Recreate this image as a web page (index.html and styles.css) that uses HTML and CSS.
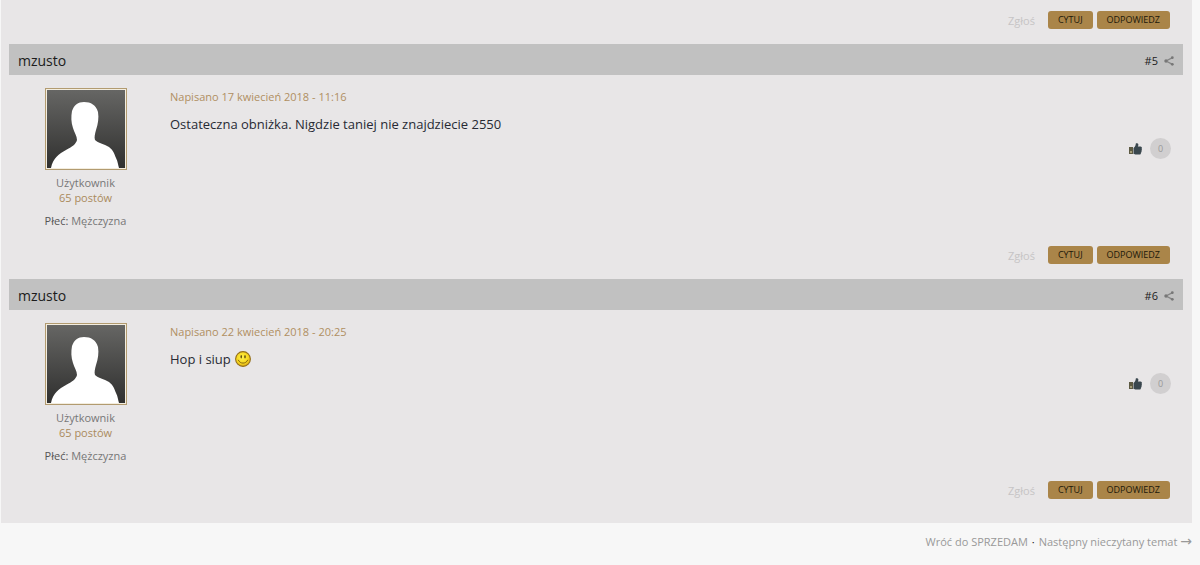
FILE: index.html
```
<!DOCTYPE html>
<html lang="pl">
<head>
	<meta charset="UTF-8">
	<meta name="viewport" content="width=device-width, initial-scale=1.0">
	<title>SPRZEDAM</title>
	<link rel="stylesheet" href="styles.css">
</head>
<body>

	<!-- shared shapes -->
	<svg class="defs" width="0" height="0">
		<defs>
			<linearGradient id="shade" x1="0" y1="0" x2="0" y2="1">
				<stop offset="0" stop-color="#666664"/>
				<stop offset="1" stop-color="#30302f"/>
			</linearGradient>
			<radialGradient id="gold" cx="0.45" cy="0.4" r="0.65">
				<stop offset="0" stop-color="#fff04a"/>
				<stop offset="0.6" stop-color="#f7d81f"/>
				<stop offset="1" stop-color="#d9a514"/>
			</radialGradient>
		</defs>
		<symbol id="person" viewBox="0 0 78 78">
			<rect width="78" height="78" fill="url(#shade)"/>
			<path fill="#fff" d="M4 78C6 68 12 64 19 60C25 57 29 54 30 50C30 46 27 42 26 38C24 32 24 27 25 21C27 15 31 12 37 12C44 12 49 15 51 22C52 28 51 34 49 40C48 44 47 47 48 50C51 53 57 54 62 57C66 60 67 63 69 68C71 72 71 75 72 78Z"/>
		</symbol>
		<symbol id="share" viewBox="0 0 10 10">
			<path d="M8.500 1.700L2 5L8.500 8.300" fill="none" stroke="#858585" stroke-width="1.3"/>
			<circle cx="8.300" cy="1.700" r="1.400" fill="#777"/>
			<circle cx="2" cy="5" r="1.700" fill="#777"/>
			<circle cx="8.300" cy="8.300" r="1.400" fill="#777"/>
		</symbol>
		<symbol id="thumb" viewBox="0 0 13 12">
			<rect x="0" y="4" width="4" height="7" fill="#5d5a43"/>
			<rect x="1" y="8" width="2" height="2" fill="#a59d78"/>
			<path fill="#3a474e" d="M4.500 5C6.200 4 6.700 2.500 6.800 0.600C7 0 9 0 9.300 1.300C9.500 2.300 9.200 2.800 8.800 3.500H11.500C13 3.500 13.200 5.200 12.600 5.700C13.100 6.400 12.900 7.400 12.400 7.800C12.800 8.500 12.500 9.400 11.900 9.700C12 11 11.400 11.500 10.500 11.500H7C6 11.500 5.500 11 4.500 11Z"/>
		</symbol>
		<symbol id="smile" viewBox="0 0 16 16">
			<circle cx="8" cy="8" r="7.400" fill="url(#gold)" stroke="#94701c" stroke-width="1.1"/>
			<ellipse cx="6.200" cy="5.700" rx="0.700" ry="1.700" fill="#4d3a08"/>
			<ellipse cx="10" cy="5.700" rx="0.700" ry="1.700" fill="#4d3a08"/>
			<path d="M3.200 8.800C5 13.200 11 13.200 12.800 8.800" fill="none" stroke="#7a5a0c" stroke-width="0.9"/>
		</symbol>
	</svg>

	<main class="topic">
		<div class="controls">
			<a class="report" href="#">Zgłoś</a>
			<button class="btn" type="button">CYTUJ</button>
			<button class="btn" type="button">ODPOWIEDZ</button>
		</div>

		<article class="post">
			<header class="post-head">
				<h3 class="nick">mzusto</h3>
				<a class="number" href="#">#5 <svg class="share"><use href="#share"/></svg></a>
			</header>
			<div class="post-wrap">
				<aside class="author">
					<svg class="avatar"><use href="#person"/></svg>
					<p class="group">Użytkownik</p>
					<p class="count">65 postów</p>
					<p class="gender"><b>Płeć:</b> Mężczyzna</p>
				</aside>
				<div class="post-body">
					<p class="date">Napisano 17 kwiecień 2018 - 11:16</p>
					<p class="message">Ostateczna obniżka. Nigdzie taniej nie znajdziecie 2550</p>
					<div class="rep">
						<button class="like" type="button" aria-label="Lubię to"><svg><use href="#thumb"/></svg></button>
						<span class="score">0</span>
					</div>
				</div>
			</div>
			<div class="controls">
				<a class="report" href="#">Zgłoś</a>
				<button class="btn" type="button">CYTUJ</button>
				<button class="btn" type="button">ODPOWIEDZ</button>
			</div>
		</article>

		<article class="post">
			<header class="post-head">
				<h3 class="nick">mzusto</h3>
				<a class="number" href="#">#6 <svg class="share"><use href="#share"/></svg></a>
			</header>
			<div class="post-wrap">
				<aside class="author">
					<svg class="avatar"><use href="#person"/></svg>
					<p class="group">Użytkownik</p>
					<p class="count">65 postów</p>
					<p class="gender"><b>Płeć:</b> Mężczyzna</p>
				</aside>
				<div class="post-body">
					<p class="date">Napisano 22 kwiecień 2018 - 20:25</p>
					<p class="message">Hop i siup <svg class="emo"><use href="#smile"/></svg></p>
					<div class="rep">
						<button class="like" type="button" aria-label="Lubię to"><svg><use href="#thumb"/></svg></button>
						<span class="score">0</span>
					</div>
				</div>
			</div>
			<div class="controls">
				<a class="report" href="#">Zgłoś</a>
				<button class="btn" type="button">CYTUJ</button>
				<button class="btn" type="button">ODPOWIEDZ</button>
			</div>
		</article>
	</main>

	<nav class="topic-nav">
		<a href="#">Wróć do SPRZEDAM</a>
		<span class="dot">·</span>
		<a href="#">Następny nieczytany temat <span class="arrow">→</span></a>
	</nav>

</body>
</html>
```
FILE: styles.css
```
* {
	box-sizing: border-box;
}
body {
	margin: 0;
	background: #f7f7f7;
	color: #272a34;
	font-family: "Open Sans", sans-serif;
	font-size: 13px;
}
p, h3 {
	margin: 0;
	font-weight: normal;
}
a {
	color: inherit;
	text-decoration: none;
}
button {
	border: 0;
	font-family: inherit;
	cursor: pointer;
}
.defs {
	display: block;
}
.topic {
	margin: 0 8px 0 1px;
	padding: 11px 9px 9px 8px;
	background: #e8e6e7;
}

/* buttons under a post */
.controls {
	display: flex;
	align-items: center;
	justify-content: flex-end;
	gap: 4px;
	height: 18px;
	margin: 0 13px 15px 0;
}
.report {
	margin-right: 9px;
	color: #c6c4c5;
	font-size: 11px;
}
.btn {
	height: 18px;
	padding: 0 10px;
	border-radius: 3px;
	background: #aa8549;
	color: #20180a;
	font-size: 9px;
	line-height: 18px;
}

.post-head {
	display: flex;
	align-items: center;
	justify-content: space-between;
	height: 31px;
	padding: 2px 9px 0;
	background: #c1c1c1;
}
.nick {
	color: #1c1c1c;
	font-size: 14px;
}
.number {
	display: flex;
	align-items: center;
	gap: 6px;
	color: #1c1c1c;
	font-size: 11px;
}
.share {
	width: 10px;
	height: 10px;
}
.post-wrap {
	display: flex;
	gap: 8px;
	min-height: 171px;
	padding-top: 13px;
}

/* left column */
.author {
	width: 153px;
	color: #777;
	font-size: 11px;
	line-height: 15px;
	text-align: center;
}
.avatar {
	display: block;
	width: 82px;
	height: 82px;
	margin: 0 auto 5px;
	padding: 1px;
	border: 1px solid #b29b70;
	background: #f3eddf;
}
.count {
	color: #aa8a5c;
}
.gender {
	margin-top: 8px;
}
.gender b {
	color: #555;
	font-weight: normal;
}

.post-body {
	flex: 1;
}
.date {
	color: #b08f62;
	font-size: 11px;
	line-height: 17px;
}
.message {
	display: flex;
	align-items: center;
	gap: 4px;
	margin-top: 9px;
	font-size: 13px;
	line-height: 20px;
}
.emo {
	width: 16px;
	height: 16px;
}
.rep {
	display: flex;
	align-items: center;
	justify-content: flex-end;
	gap: 8px;
	margin: 4px 12px 0 0;
}
.like {
	padding: 0;
	background: none;
}
.like svg {
	display: block;
	width: 13px;
	height: 12px;
}
.score {
	width: 21px;
	border-radius: 50%;
	background: #d1cfd0;
	color: #999;
	font-size: 9px;
	line-height: 21px;
	text-align: center;
}

.topic-nav {
	display: flex;
	justify-content: flex-end;
	gap: 4px;
	padding: 10px 8px;
	color: #999;
	font-size: 11px;
	line-height: 17px;
}
.dot {
	color: #222;
}
.arrow {
	font-family: "DejaVu Sans", sans-serif;
	font-size: 14px;
	line-height: 1;
}
```
